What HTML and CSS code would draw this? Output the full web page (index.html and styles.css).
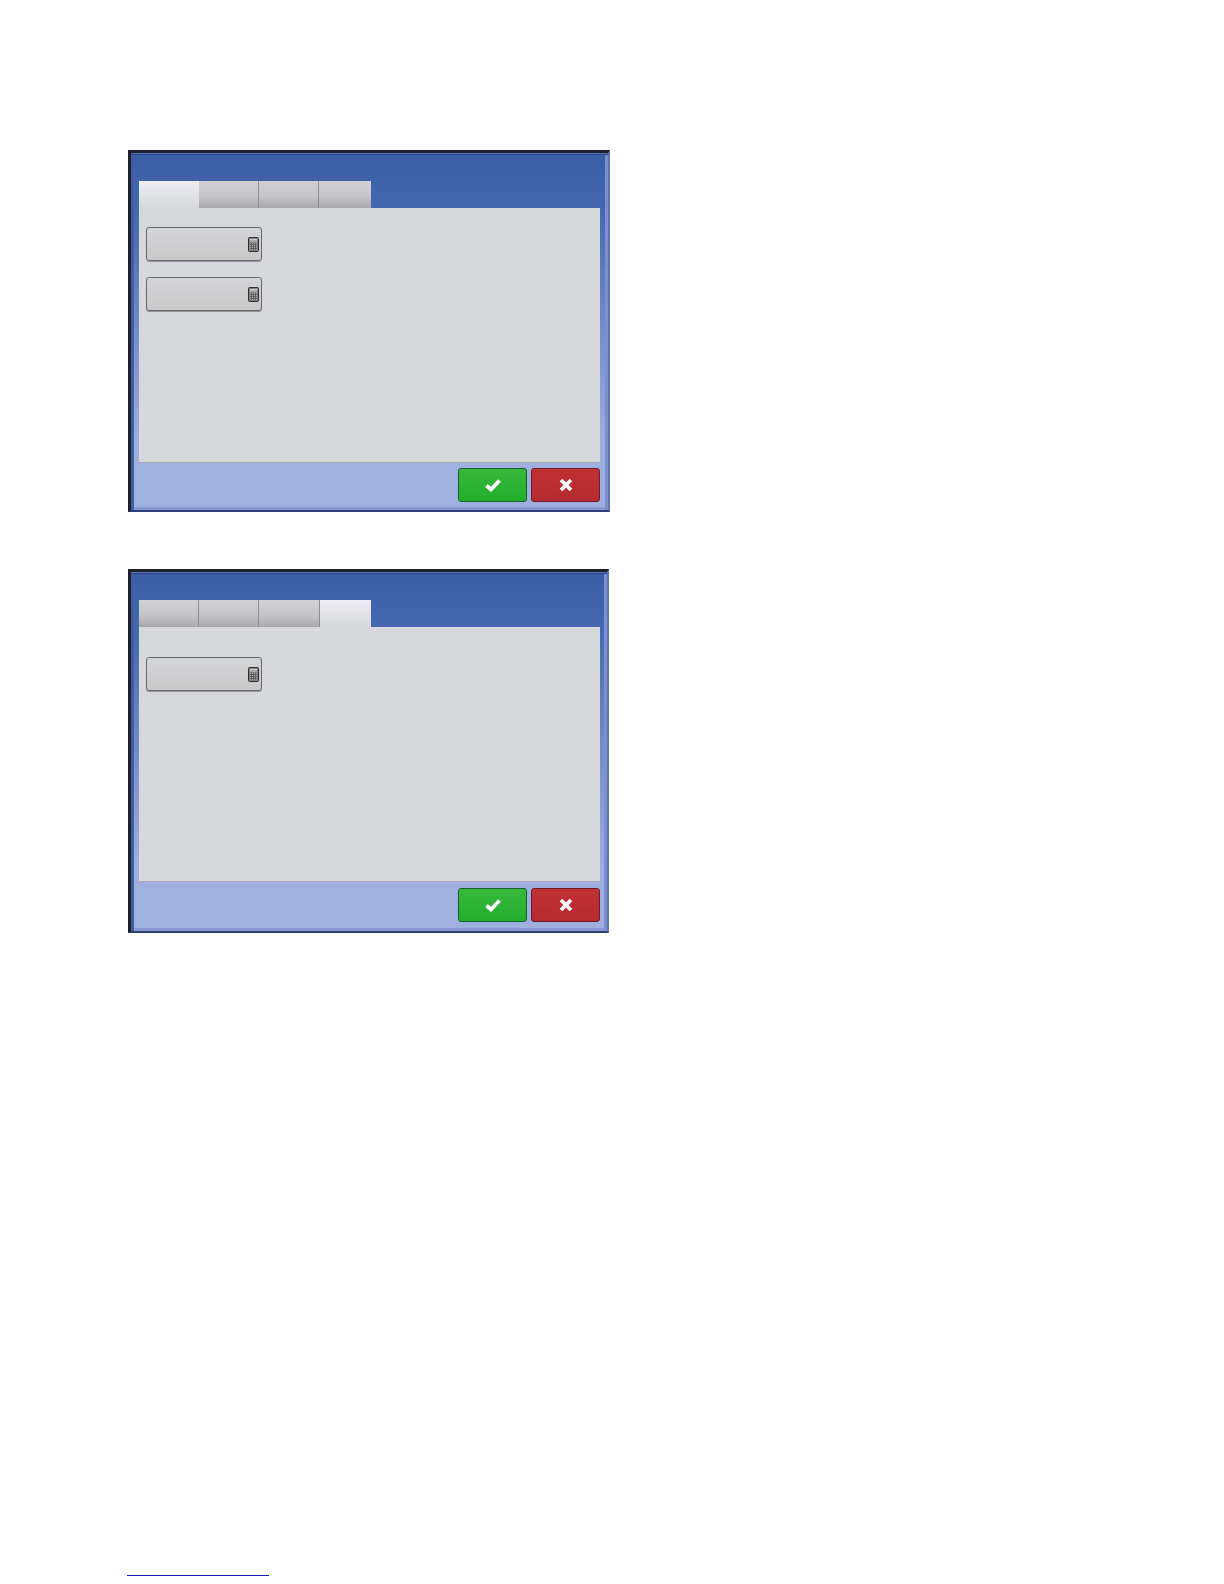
FILE: index.html
```html
<!DOCTYPE html>
<html lang="en">
<head>
    <meta charset="UTF-8">
    <meta name="viewport" content="width=device-width, initial-scale=1.0">
    <title>Screens</title>
    <link rel="stylesheet" href="styles.css">
</head>
<body>
    <svg class="icon-defs" width="0" height="0">
        <symbol id="calc-icon" viewBox="0 0 11 15">
            <rect x="0.5" y="0.5" width="10" height="14" rx="1" fill="#808080" stroke="#2e2e2e"/>
            <rect x="2" y="2" width="7" height="3" fill="#a8a8a8"/>
            <path d="M2 2.5h7" stroke="#d0d0d0" stroke-width="1"/>
            <rect x="2" y="6" width="7" height="7" fill="#a6a6a6"/>
            <path d="M2 7.5h7M2 9.5h7M2 11.5h7M3.5 6v7M5.5 6v7M7.5 6v7" stroke="#555" stroke-width="0.8" fill="none"/>
        </symbol>
        <symbol id="check-icon" viewBox="0 0 16 14">
            <path d="M1.5 7.5 L6 11.5 L14.5 2.5" fill="none" stroke="#fff" stroke-width="3.8"/>
        </symbol>
        <symbol id="cross-icon" viewBox="0 0 14 14">
            <path d="M2 2 L12 12 M12 2 L2 12" fill="none" stroke="#fff" stroke-width="3.8"/>
        </symbol>
    </svg>

    <div class="page">
        <div class="window first-window">
            <div class="tabs">
                <div class="tab tab-first active"></div>
                <div class="tab tab-second"></div>
                <div class="tab tab-third"></div>
                <div class="tab tab-fourth"></div>
            </div>
            <div class="panel">
                <div class="field"><svg class="calc"><use href="#calc-icon"/></svg></div>
                <div class="field"><svg class="calc"><use href="#calc-icon"/></svg></div>
            </div>
            <div class="actions">
                <button class="action-button ok-button"><svg class="check"><use href="#check-icon"/></svg></button>
                <button class="action-button cancel-button"><svg class="cross"><use href="#cross-icon"/></svg></button>
            </div>
        </div>

        <div class="window second-window">
            <div class="tabs">
                <div class="tab tab-first"></div>
                <div class="tab tab-second"></div>
                <div class="tab tab-third"></div>
                <div class="tab tab-fourth active"></div>
            </div>
            <div class="panel panel-low">
                <div class="field"><svg class="calc"><use href="#calc-icon"/></svg></div>
            </div>
            <div class="actions">
                <button class="action-button ok-button"><svg class="check"><use href="#check-icon"/></svg></button>
                <button class="action-button cancel-button"><svg class="cross"><use href="#cross-icon"/></svg></button>
            </div>
        </div>

        <div class="footer-rule"></div>
    </div>
</body>
</html>
```

FILE: styles.css
```css
* {
    box-sizing: border-box;
}

body {
    margin: 0;
    background-color: #fefefe;
    font-family: 'Liberation Sans', sans-serif;
}

.icon-defs {
    display: block;
    height: 0;
}

.page {
    height: 1584px;
    padding: 150px 0 0 128px;
    display: flex;
    flex-direction: column;
    overflow: hidden;
}

.window {
    display: flex;
    flex-direction: column;
    padding: 28px 8px 0 8px;
    border: 3px solid #20202c;
    border-right: 2px solid #5f74b4;
    border-bottom: 2px solid #2f3d78;
    background: linear-gradient(to bottom, #3a5ea6 0%, #4568b0 16%, #9fb0e0 82%, #9fb0e0 100%);
    box-shadow: inset 0 1px 0 #5a74b0, inset 0 2px 0 #2a4688, inset 3px 0 0 #3f5f9c, inset -3px 0 0 #7c90d0, inset 0 -3px 0 #8798d4;
}

.first-window {
    width: 482px;
    height: 362px;
}

.second-window {
    width: 481px;
    height: 364px;
    margin-top: 57px;
    padding-right: 7px;
}

.tabs {
    display: flex;
    height: 27px;
    flex-shrink: 0;
}

.tab {
    border-right: 1px solid #8e8e90;
    background: linear-gradient(to bottom, #d2d2d6 0%, #c6c6c8 55%, #a8a8aa 100%);
}

.tab.active {
    border-right: none;
    background: linear-gradient(to bottom, #eeeef4, #d6d8db);
}

.tab-first { width: 60px; }
.tab-second { width: 60px; }
.tab-third { width: 60px; }
.tab-fourth { width: 52px; border-right: none; }

.second-window .tab-third { width: 61px; }
.second-window .tab-fourth { width: 51px; }

.panel {
    height: 255px;
    flex-shrink: 0;
    padding: 19px 0 0 7px;
    display: flex;
    flex-direction: column;
    gap: 16px;
    background-color: #d6d8db;
    border-bottom: 1px solid #a4a8b4;
}

.panel-low {
    padding-top: 30px;
}

.field {
    width: 116px;
    height: 34px;
    display: flex;
    align-items: center;
    justify-content: flex-end;
    padding-right: 2px;
    border: 1px solid #66676c;
    border-radius: 3px;
    background: linear-gradient(to bottom, #d4d5d8, #c9c9c9);
    box-shadow: 0 1px 0 #9a9a9e;
}

.calc {
    width: 11px;
    height: 15px;
}

.actions {
    display: flex;
    justify-content: flex-end;
    gap: 4px;
    padding-top: 5px;
}

.second-window .actions {
    padding-top: 6px;
}

.action-button {
    width: 69px;
    height: 34px;
    padding: 0;
    display: flex;
    align-items: center;
    justify-content: center;
    border-radius: 3px;
    cursor: pointer;
}

.ok-button {
    background: linear-gradient(to bottom, #38b83c, #22ae2e);
    border: 1px solid #14622a;
}

.cancel-button {
    background: linear-gradient(to bottom, #c03035, #b52b30);
    border: 1px solid #6e1c24;
}

.check {
    width: 16px;
    height: 14px;
}

.cross {
    width: 14px;
    height: 14px;
}

.footer-rule {
    width: 142px;
    height: 1px;
    margin: 642px 0 0 -1px;
    background-color: #1a1ab0;
}
```
